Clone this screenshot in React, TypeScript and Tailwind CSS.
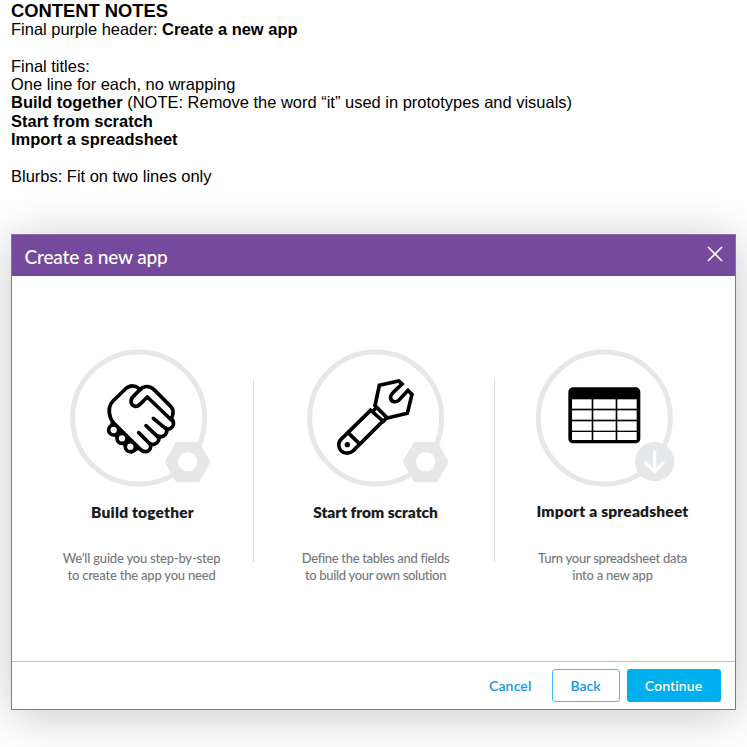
import React from "react";

const ring = { fill: "none", stroke: "#e6e7e9", strokeWidth: 15 };
const line = {
  fill: "none",
  stroke: "#000",
  strokeWidth: 11,
  strokeLinecap: "round" as const,
  strokeLinejoin: "round" as const,
};

function NutBadge() {
  return (
    <>
      <path d="M348 306H418L452 366L418 426H348L314 366Z" fill="#e6e7e9" />
      <circle cx="383" cy="365" r="29" fill="#fff" />
    </>
  );
}

function HandshakeArt() {
  return (
    <svg viewBox="0 0 510 450" className="h-[150px] w-[170px]">
      <circle cx="236" cy="234" r="198" {...ring} />
      <path d="M152 246L240 328L214 342L146 272Z" fill="#000" />
      <g {...line} fill="#fff">
        <circle cx="161" cy="270" r="15" />
        <circle cx="186" cy="295" r="15" />
        <circle cx="211" cy="320" r="15" />
      </g>
      <path
        {...line}
        fill="#fff"
        d="M240 149C228 135 210 134 196 147L159 183C146 196 146 216 151 232C153 239 156 244 161 249L241 328C251 338 266 337 271 325C273 320 272 315 270 311C280 317 291 311 295 303C298 296 297 292 294 288C305 293 315 288 319 279C322 272 320 267 317 264C326 270 337 265 340 255C342 247 339 241 334 236C341 222 342 209 332 199L282 149C270 137 252 136 240 149Z"
      />
      <path {...line} d="M240 149L220 169C208 181 213 197 226 199C233 200 238 195 243 190L262 171L334 240M280 235L317 266M258 257L295 292M236 278L270 312" />
      <NutBadge />
    </svg>
  );
}

function WrenchArt() {
  return (
    <svg viewBox="0 0 510 450" className="h-[150px] w-[170px]">
      <circle cx="233" cy="234" r="198" {...ring} />
      <g {...line} strokeLinecap="butt" strokeLinejoin="miter">
        <path d="M220 209L129 298C119 308 121 325 130 333C140 342 156 341 166 332L256 242" />
        <path d="M214 207L259 247M150 278L184 311" />
        <path d="M239 200L225 213M268 231L254 246" />
        <path d="M285 158L312 132L302 123L244 136L231 197L268 234L328 220L342 163L330 151L303 180C294 189 280 186 278 175C276 168 280 163 287 156" />
      </g>
      <circle cx="148" cy="314" r="8" fill="#000" />
      <NutBadge />
    </svg>
  );
}

function TableArt() {
  return (
    <svg viewBox="0 0 510 450" className="h-[150px] w-[170px]">
      <circle cx="235" cy="234" r="198" {...ring} />
      <rect x="127" y="142" width="216" height="168" rx="14" fill="#000" />
      <g fill="#fff">
        {[178, 211, 244, 276].map((y) => (
          <React.Fragment key={y}>
            <rect x="138" y={y} width="59" height={y === 276 ? 24 : 28} />
            <rect x="202" y={y} width="67" height={y === 276 ? 24 : 28} />
            <rect x="274" y={y} width="58" height={y === 276 ? 24 : 28} />
          </React.Fragment>
        ))}
      </g>
      <circle cx="386" cy="365" r="59" fill="#e6e7e9" />
      <path d="M386 336V394M360 369L386 395L411 369" fill="none" stroke="#fff" strokeWidth="10" strokeLinecap="round" strokeLinejoin="round" />
    </svg>
  );
}

export default function App() {
  return (
    <div className="h-[747px] w-[747px] overflow-hidden bg-white font-['Lato',sans-serif] [font-variant-ligatures:none]">
      <div className="h-[234px] pl-[11px] font-['Liberation_Sans',Arial,sans-serif] text-[16.48px] leading-[18.33px] whitespace-nowrap text-black">
        <div className="pt-[1.7px] text-[18.35px] font-bold">CONTENT NOTES</div>
        <div>Final purple header: <b>Create a new app</b></div>
        <div>&nbsp;</div>
        <div>Final titles:</div>
        <div>One line for each, no wrapping</div>
        <div><b>Build together</b> (NOTE: Remove the word “it” used in prototypes and visuals)</div>
        <div><b>Start from scratch</b></div>
        <div><b>Import a spreadsheet</b></div>
        <div>&nbsp;</div>
        <div>Blurbs: Fit on two lines only</div>
      </div>

      <div className="ml-[11px] flex h-[476px] w-[725px] flex-col border border-[#9068b4] bg-white shadow-[0_5px_46px_rgba(0,0,0,0.22)]">
        <header className="flex h-[41px] shrink-0 items-center justify-between bg-[#75499b] pr-[12.5px] pl-[12.5px] text-white">
          <h1 className="pt-[3px] text-[19px] leading-6 font-medium tracking-[-0.15px]">Create a new app</h1>
          <svg viewBox="0 0 16 16" className="mb-[4px] size-4" fill="none" stroke="#fff" strokeWidth="1.7">
            <path d="M1 1L15 15M15 1L1 15" />
          </svg>
        </header>

        <main className="grid h-[385px] shrink-0 grid-cols-[242px_241px_240px] pt-[64px] text-center">
          <section className="relative">
            <div className="flex pl-[48px]"><HandshakeArt /></div>
            <h2 className="mt-[12px] pl-[19px] text-[15.5px] leading-5 font-extrabold tracking-[0.2px] text-[#1c1b22]">Build together</h2>
            <p className="mt-[28px] pl-[17px] text-[13px] leading-[16.5px] font-medium tracking-[-0.2px] text-[#77787c]">
              We’ll guide you step-by-step<br />to create the app you need
            </p>
            <div className="absolute top-[40px] right-0 h-[182px] w-px bg-[#dcdddf]" />
          </section>
          <section className="relative">
            <div className="flex pl-[44px]"><WrenchArt /></div>
            <h2 className="mt-[12px] pl-[2px] text-[15.5px] leading-5 font-extrabold tracking-[-0.04px] text-[#1c1b22]">Start from scratch</h2>
            <p className="mt-[28px] pl-[2px] text-[13px] leading-[16.5px] font-medium tracking-[-0.32px] text-[#77787c]">
              Define the tables and fields<br />to build your own solution
            </p>
            <div className="absolute top-[40px] right-0 h-[182px] w-px bg-[#dcdddf]" />
          </section>
          <section>
            <div className="flex pl-[31px]"><TableArt /></div>
            <h2 className="mt-[11px] pr-[5px] text-[15.5px] leading-5 font-extrabold tracking-[0.2px] text-[#1c1b22]">Import a spreadsheet</h2>
            <p className="mt-[29px] pr-[5px] text-[13px] leading-[16.5px] font-medium tracking-[-0.25px] text-[#77787c]">
              Turn your spreadsheet data<br />into a new app
            </p>
          </section>
        </main>

        <footer className="flex flex-1 items-center justify-end border-t border-[#c2c2c4] pr-[14.5px] text-[14px] font-semibold">
          <button className="mr-[20px] tracking-[0.15px] text-[#0a9ceb]">Cancel</button>
          <button className="mr-[7px] h-[33px] w-[68px] rounded-[3px] border border-[#3fc0f0] text-[#0a9ceb]">Back</button>
          <button className="h-[33px] w-[94px] rounded-[3px] bg-[#00b0ee] tracking-[0.1px] text-white">Continue</button>
        </footer>
      </div>
    </div>
  );
}
